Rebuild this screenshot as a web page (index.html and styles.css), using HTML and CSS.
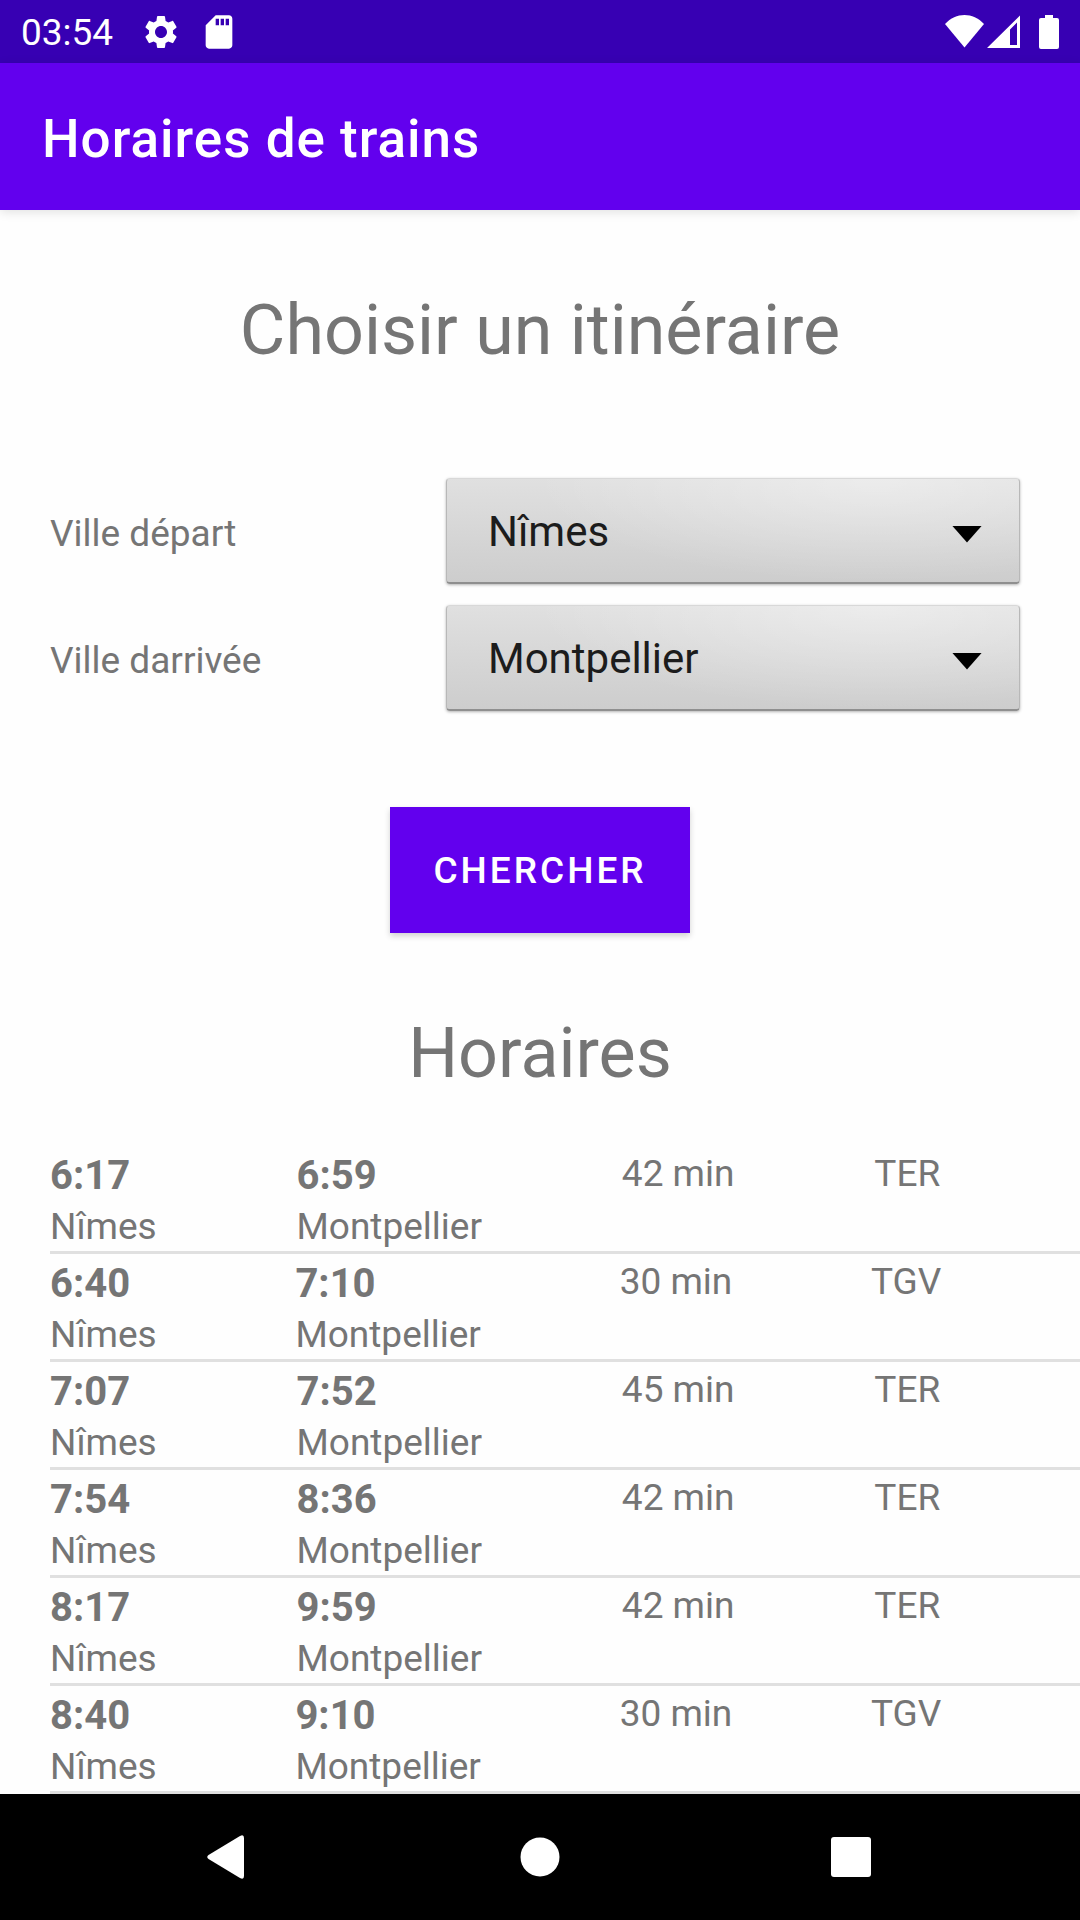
FILE: index.html
```html
<!DOCTYPE html>
<html lang="fr">
<head>
<meta charset="utf-8">
<meta name="viewport" content="width=device-width, initial-scale=1">
<title>Horaires de trains</title>
<link rel="stylesheet" href="styles.css">
</head>
<body>
<div class="status-bar">
  <span class="clock">03:54</span>
  <svg class="status-icon" viewBox="0 0 24 24" aria-hidden="true"><path d="M19.14 12.94c.04-.3.06-.61.06-.94 0-.32-.02-.64-.07-.94l2.03-1.58c.18-.14.23-.41.12-.61l-1.92-3.32c-.12-.22-.37-.29-.59-.22l-2.39.96c-.5-.38-1.03-.7-1.62-.94l-.36-2.54c-.04-.24-.24-.41-.48-.41h-3.84c-.24 0-.43.17-.47.41l-.36 2.54c-.59.24-1.13.57-1.62.94l-2.39-.96c-.22-.08-.47 0-.59.22L2.74 8.87c-.12.21-.08.47.12.61l2.03 1.58c-.05.3-.09.63-.09.94s.02.64.07.94l-2.03 1.58c-.18.14-.23.41-.12.61l1.92 3.32c.12.22.37.29.59.22l2.39-.96c.5.38 1.03.7 1.62.94l.36 2.54c.05.24.24.41.48.41h3.84c.24 0 .44-.17.47-.41l.36-2.54c.59-.24 1.13-.56 1.62-.94l2.39.96c.22.08.47 0 .59-.22l1.92-3.32c.12-.22.07-.47-.12-.61l-2.01-1.58zM12 15.6c-1.98 0-3.6-1.62-3.6-3.6s1.62-3.6 3.6-3.6 3.6 1.62 3.6 3.6-1.62 3.6-3.6 3.6z"/></svg>
  <svg class="status-icon" viewBox="0 0 24 24" aria-hidden="true"><path d="M18 2h-8L4.02 8 4 20c0 1.100.9 2 2 2h12c1.100 0 2-.9 2-2V4c0-1.100-.9-2-2-2zm-6 6h-2V4h2v4zm3 0h-2V4h2v4zm3 0h-2V4h2v4z"/></svg>
  <svg class="system-icons" viewBox="0 0 114 34" aria-hidden="true">
    <path d="M0 9C11-3 28-3 39 9L19.500 32.500z"/>
    <path fill-rule="evenodd" d="M42 33L75 .5V33zM65 14.500V30h7V7.500z"/>
    <path d="M100 0h8v3h4q2 0 2 2v27q0 2-2 2H96q-2 0-2-2V5q0-2 2-2h4z"/>
  </svg>
</div>
<header class="app-bar"><h1 class="app-title">Horaires de trains</h1></header>
<main class="content">
  <h2 class="heading">Choisir un itinéraire</h2>
  <form class="search">
    <div class="field">
      <label class="field-label" for="depart">Ville départ</label>
      <div class="spinner"><select class="spinner-select" id="depart"><option>Nîmes</option><option>Montpellier</option></select></div>
    </div>
    <div class="field">
      <label class="field-label" for="arrivee">Ville darrivée</label>
      <div class="spinner"><select class="spinner-select" id="arrivee"><option>Montpellier</option><option>Nîmes</option></select></div>
    </div>
    <button class="search-button" type="button">CHERCHER</button>
  </form>
  <h2 class="heading">Horaires</h2>
  <table class="timetable">
    <tbody class="trips">
      <tr class="trip"><td class="stop"><b class="time">6:17</b>Nîmes</td><td class="stop"><b class="time">6:59</b>Montpellier</td><td class="info">42 min</td><td class="info">TER</td></tr>
      <tr class="trip"><td class="stop"><b class="time">6:40</b>Nîmes</td><td class="stop"><b class="time">7:10</b>Montpellier</td><td class="info">30 min</td><td class="info">TGV</td></tr>
      <tr class="trip"><td class="stop"><b class="time">7:07</b>Nîmes</td><td class="stop"><b class="time">7:52</b>Montpellier</td><td class="info">45 min</td><td class="info">TER</td></tr>
      <tr class="trip"><td class="stop"><b class="time">7:54</b>Nîmes</td><td class="stop"><b class="time">8:36</b>Montpellier</td><td class="info">42 min</td><td class="info">TER</td></tr>
      <tr class="trip"><td class="stop"><b class="time">8:17</b>Nîmes</td><td class="stop"><b class="time">9:59</b>Montpellier</td><td class="info">42 min</td><td class="info">TER</td></tr>
      <tr class="trip"><td class="stop"><b class="time">8:40</b>Nîmes</td><td class="stop"><b class="time">9:10</b>Montpellier</td><td class="info">30 min</td><td class="info">TGV</td></tr>
    </tbody>
  </table>
</main>
<nav class="nav-bar">
  <button class="nav-button" type="button" aria-label="Retour"><svg class="nav-icon" viewBox="0 0 44 44"><path d="M1.500 20L33 1Q37 -1 37 3V41Q37 45 33 43L1.500 24Q-1 22 1.500 20z"/></svg></button>
  <button class="nav-button" type="button" aria-label="Accueil"><svg class="nav-icon" viewBox="0 0 44 44"><circle cx="22" cy="22" r="19.500"/></svg></button>
  <button class="nav-button" type="button" aria-label="Applications récentes"><svg class="nav-icon" viewBox="0 0 44 44"><rect x="2" y="2" width="40" height="40" rx="3"/></svg></button>
</nav>
</body>
</html>
```
FILE: styles.css
```css
* {
  box-sizing: border-box;
}

body {
  margin: 0;
  min-height: 100vh;
  display: flex;
  flex-direction: column;
  background: #fefefe;
  color: #757575;
  font-family: Roboto, "Liberation Sans", sans-serif;
  font-size: 37px;
}

.status-bar {
  display: flex;
  align-items: center;
  gap: 18px;
  height: 63px;
  padding: 0 21px;
  background: #3700b3;
  color: #fff;
}

.clock {
  margin-right: 10px;
  padding-top: 2px;
}

.status-icon {
  width: 40px;
  height: 40px;
  fill: #fff;
}

.system-icons {
  width: 114px;
  height: 34px;
  margin-left: auto;
  fill: #fff;
}

.app-bar {
  display: flex;
  align-items: center;
  height: 147px;
  padding: 4px 42px 0;
  background: #6200ee;
  box-shadow: 0 2px 10px rgba(0, 0, 0, 0.12);
}

.app-title {
  margin: 0;
  color: #fff;
  font-size: 53px;
  font-weight: 500;
  letter-spacing: 1px;
}

.content {
  padding-left: 50px;
}

.heading {
  margin: 0 50px 0 0;
  font-size: 70px;
  font-weight: 400;
  line-height: 96px;
  text-align: center;
}

.search {
  display: flex;
  flex-direction: column;
}

.field {
  display: grid;
  grid-template-columns: 396fr 574fr;
  align-items: center;
  height: 127px;
  padding-right: 60px;
}

.field-label {
  padding-top: 6px;
}

.spinner {
  position: relative;
}

.spinner::after {
  content: "";
  position: absolute;
  top: 48px;
  right: 38px;
  width: 30px;
  height: 17px;
  background: #000;
  clip-path: polygon(0 0, 100% 0, 50% 100%);
  pointer-events: none;
}

.spinner-select {
  appearance: none;
  display: block;
  width: 100%;
  height: 106px;
  padding: 3px 80px 0 41px;
  border: 1px solid #b8b8b8;
  border-top-color: #d8d8d8;
  border-bottom: 2px solid #8f8f8f;
  border-radius: 4px;
  background:
    radial-gradient(60% 100% at 75% 0, rgba(255, 255, 255, 0.4), rgba(255, 255, 255, 0)),
    linear-gradient(#e0e0e0, #cdcdcd);
  box-shadow: 0 1px 3px rgba(0, 0, 0, 0.3);
  color: #1c1c1c;
  font-family: inherit;
  font-size: 42px;
}

.search-button {
  align-self: center;
  height: 126px;
  margin: 86px 50px 72px 0;
  padding: 0 43px;
  border: 0;
  background: #6200ee;
  box-shadow: 0 3px 6px rgba(0, 0, 0, 0.18);
  color: #fff;
  font-family: inherit;
  font-size: 37px;
  font-weight: 500;
  letter-spacing: 3px;
}

.content > .heading:first-child {
  padding: 72px 0 89px;
}

.timetable,
.trips {
  display: block;
}

.timetable {
  margin-top: 45px;
}

/* Each trip shares its spare width equally between its cells. */
.trip {
  display: flex;
  border-bottom: 3px solid #e0e0e0;
}

.stop,
.info {
  flex: 1 1 auto;
  padding: 3px 0 0;
  line-height: 49px;
}

.time {
  display: block;
  font-size: 40px;
  line-height: 53px;
}

.nav-bar {
  display: flex;
  justify-content: center;
  gap: 185px;
  margin-top: auto;
  background: #000;
}

.nav-button {
  display: grid;
  place-items: center;
  width: 126px;
  height: 126px;
  padding: 0;
  border: 0;
  background: none;
}

.nav-icon {
  width: 44px;
  height: 44px;
  fill: #fff;
}
```
